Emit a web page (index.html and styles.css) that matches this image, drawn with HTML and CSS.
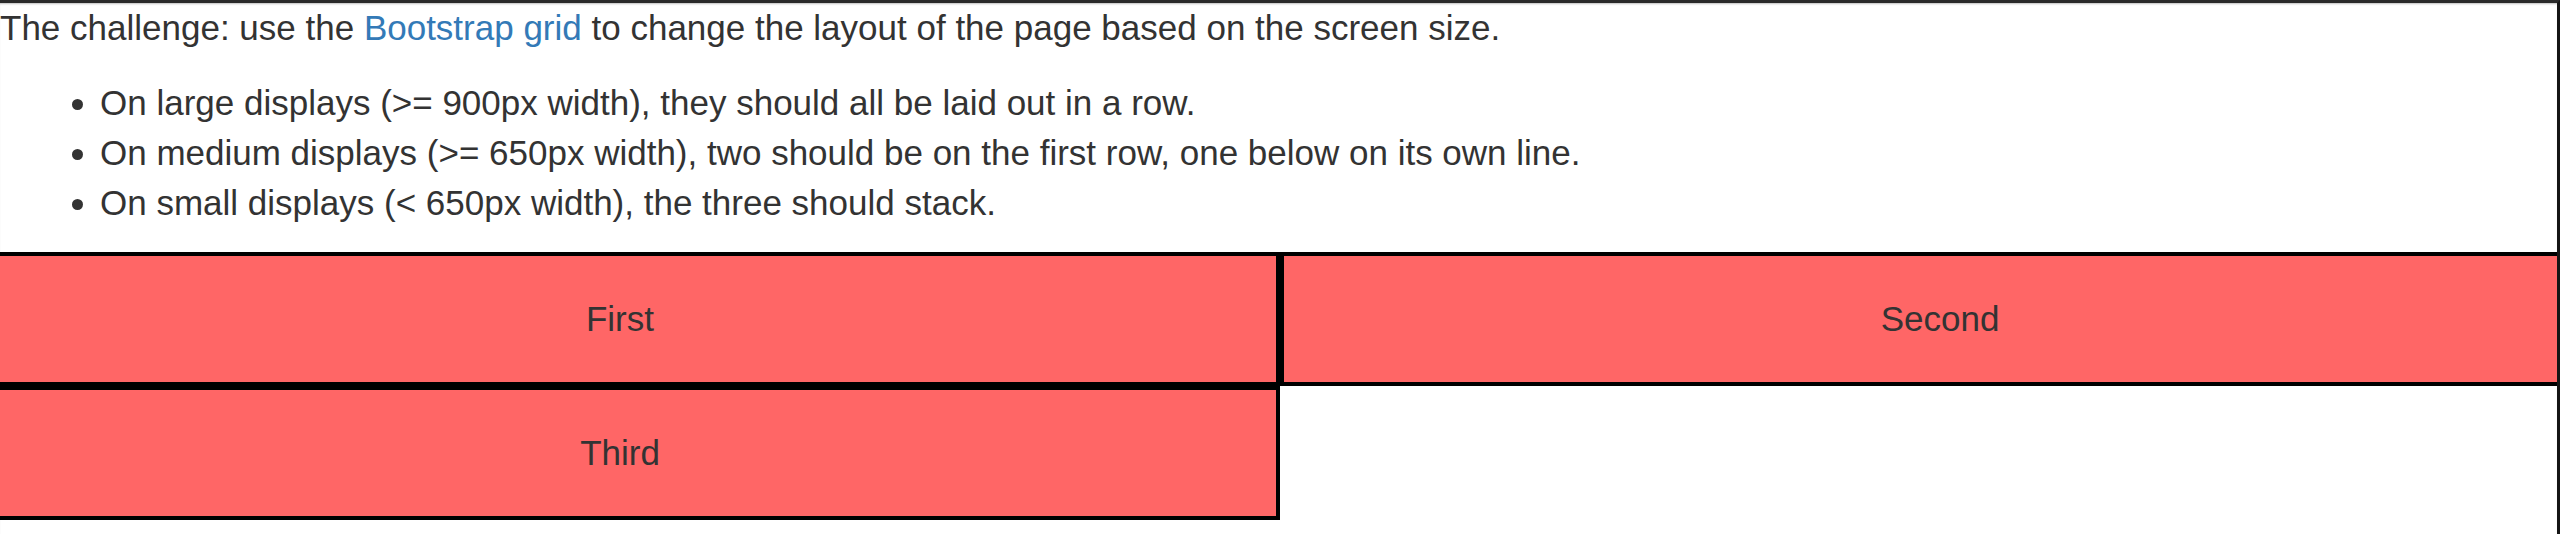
FILE: index.html
```html
<!DOCTYPE html>
<html lang="en">
<head>
<meta charset="utf-8">
<title>Bootstrap grid challenge</title>
<link rel="stylesheet" href="styles.css">
</head>
<body>
<div class="frame">
  <p class="intro">The challenge: use the <a href="#">Bootstrap grid</a> to change the layout of the page based on the screen size.</p>
  <ul class="rules">
    <li>On large displays (&gt;= 900px width), they should all be laid out in a row.</li>
    <li>On medium displays (&gt;= 650px width), two should be on the first row, one below on its own line.</li>
    <li>On small displays (&lt; 650px width), the three should stack.</li>
  </ul>
  <div class="grid">
    <div class="box">First</div>
    <div class="box">Second</div>
    <div class="box">Third</div>
  </div>
</div>
</body>
</html>
```
FILE: styles.css
```css
html, body {
  margin: 0;
  padding: 0;
  background: #fff;
}

body {
  font-family: "Liberation Sans", Arial, Helvetica, sans-serif;
  font-size: 35px;
  line-height: 50px;
  color: #333;
}

.frame {
  box-sizing: border-box;
  height: 534px;
  border-top: 3px solid #2a2a2a;
  border-right: 3px solid #151515;
  box-shadow: inset 0 2px 2px -1px rgba(0, 0, 0, 0.25);
  overflow: hidden;
}

.intro {
  margin: 0 0 25px 0;
}

.intro a {
  color: #337ab7;
  text-decoration: none;
}

.rules {
  margin: 0 0 24px 0;
  padding-left: 100px;
}

.grid {
  display: grid;
  grid-template-columns: 1320px 1320px;
  margin-left: -40px;
}

.box {
  box-sizing: border-box;
  height: 134px;
  border: 4px solid #000;
  background: #ff6666;
  display: flex;
  align-items: center;
  justify-content: center;
}
```
